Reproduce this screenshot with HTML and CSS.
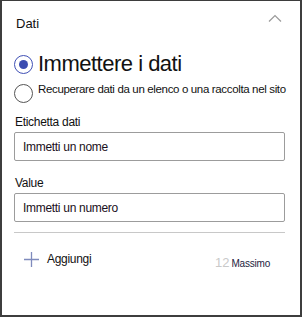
FILE: index.html
```html
<!DOCTYPE html>
<html lang="it">
<head>
    <meta charset="UTF-8">
    <title>Dati</title>
    <link rel="stylesheet" href="styles.css">
</head>
<body>
    <div class="panel">
        <div class="panel-header">
            <span class="panel-title">Dati</span>
            <svg class="chevron" width="14" height="8" viewBox="0 0 14 8">
                <path d="M1 7.5 L7 1.5 L13 7.5" fill="none" stroke="#9a9a9a" stroke-width="1.2"/>
            </svg>
        </div>

        <div class="choices">
            <label class="choice big">
                <span class="radio checked"></span>
                <span>Immettere i dati</span>
            </label>
            <label class="choice small">
                <span class="radio"></span>
                <span>Recuperare dati da un elenco o una raccolta nel sito</span>
            </label>
        </div>

        <div class="field">
            <div class="field-label">Etichetta dati</div>
            <div class="input">Immetti un nome</div>
        </div>
        <div class="field">
            <div class="field-label">Value</div>
            <div class="input">Immetti un numero</div>
        </div>

        <div class="divider"></div>

        <div class="footer">
            <div class="add">
                <svg width="15" height="15" viewBox="0 0 15 15">
                    <path d="M7.5 0 V15 M0 7.5 H15" stroke="#7f8bbd" stroke-width="1.3"/>
                </svg>
                <span>Aggiungi</span>
            </div>
            <div class="limit">
                <span class="count">12</span>
                <span class="limit-label">Massimo</span>
            </div>
        </div>
    </div>
</body>
</html>
```

FILE: styles.css
```css
* {
    margin: 0;
    padding: 0;
    box-sizing: border-box;
}

body {
    background: #fff;
    font-family: 'Liberation Sans', Arial, sans-serif;
    color: #111;
}

.panel {
    width: 302px;
    height: 317px;
    border: 2px solid #3d3d3d;
    border-top-width: 1px;
    padding: 0 16px 0 12px;
}

.panel-header {
    display: flex;
    justify-content: space-between;
    align-items: center;
    height: 40px;
    padding: 4px 2px 0 2px;
}

.panel-title {
    font-size: 13px;
}

.chevron {
    margin-top: -10px;
}

.choices {
    display: flex;
    flex-direction: column;
    gap: 8px;
    margin-top: 12px;
}

.choice {
    display: flex;
    align-items: center;
    gap: 5px;
    white-space: nowrap;
}

.choice.big {
    font-size: 22px;
    letter-spacing: -0.5px;
    height: 22px;
}

.choice.small {
    font-size: 11.5px;
    letter-spacing: -0.35px;
    align-items: flex-start;
}

.radio {
    width: 19px;
    height: 19px;
    border-radius: 50%;
    border: 1px solid #555;
    flex-shrink: 0;
    position: relative;
}

.choice.small .radio {
    margin-top: 1px;
}

.radio.checked {
    border-color: #4050b5;
}

.radio.checked::after {
    content: '';
    position: absolute;
    left: 4px;
    top: 4px;
    width: 9px;
    height: 9px;
    border-radius: 50%;
    background: #3c4db0;
}

.field {
    margin-top: 12px;
}

.field + .field {
    margin-top: 15px;
}

.field-label {
    font-size: 12px;
    letter-spacing: -0.3px;
    margin-bottom: 3px;
    padding-left: 1px;
}

.input {
    height: 29px;
    width: 271px;
    border: 1px solid #9c9c9c;
    border-radius: 2px;
    font-size: 12px;
    letter-spacing: -0.3px;
    padding: 7px 8px;
    color: #1a1020;
}

.divider {
    height: 1px;
    width: 271px;
    margin-top: 10px;
    background: #c8c8c8;
}

.footer {
    display: flex;
    justify-content: space-between;
    align-items: center;
    margin-top: 14px;
    padding: 0 0 0 10px;
}

.add {
    display: flex;
    align-items: center;
    gap: 8px;
    font-size: 12px;
    letter-spacing: -0.3px;
}

.add svg {
    margin-top: 2px;
}

.limit {
    display: flex;
    align-items: baseline;
    margin-top: 8px;
    margin-right: 14px;
}

.count {
    font-size: 13px;
    color: #c9c9c9;
    margin-right: 2px;
}

.limit-label {
    font-size: 10px;
    letter-spacing: -0.2px;
    color: #1c2340;
}
```
